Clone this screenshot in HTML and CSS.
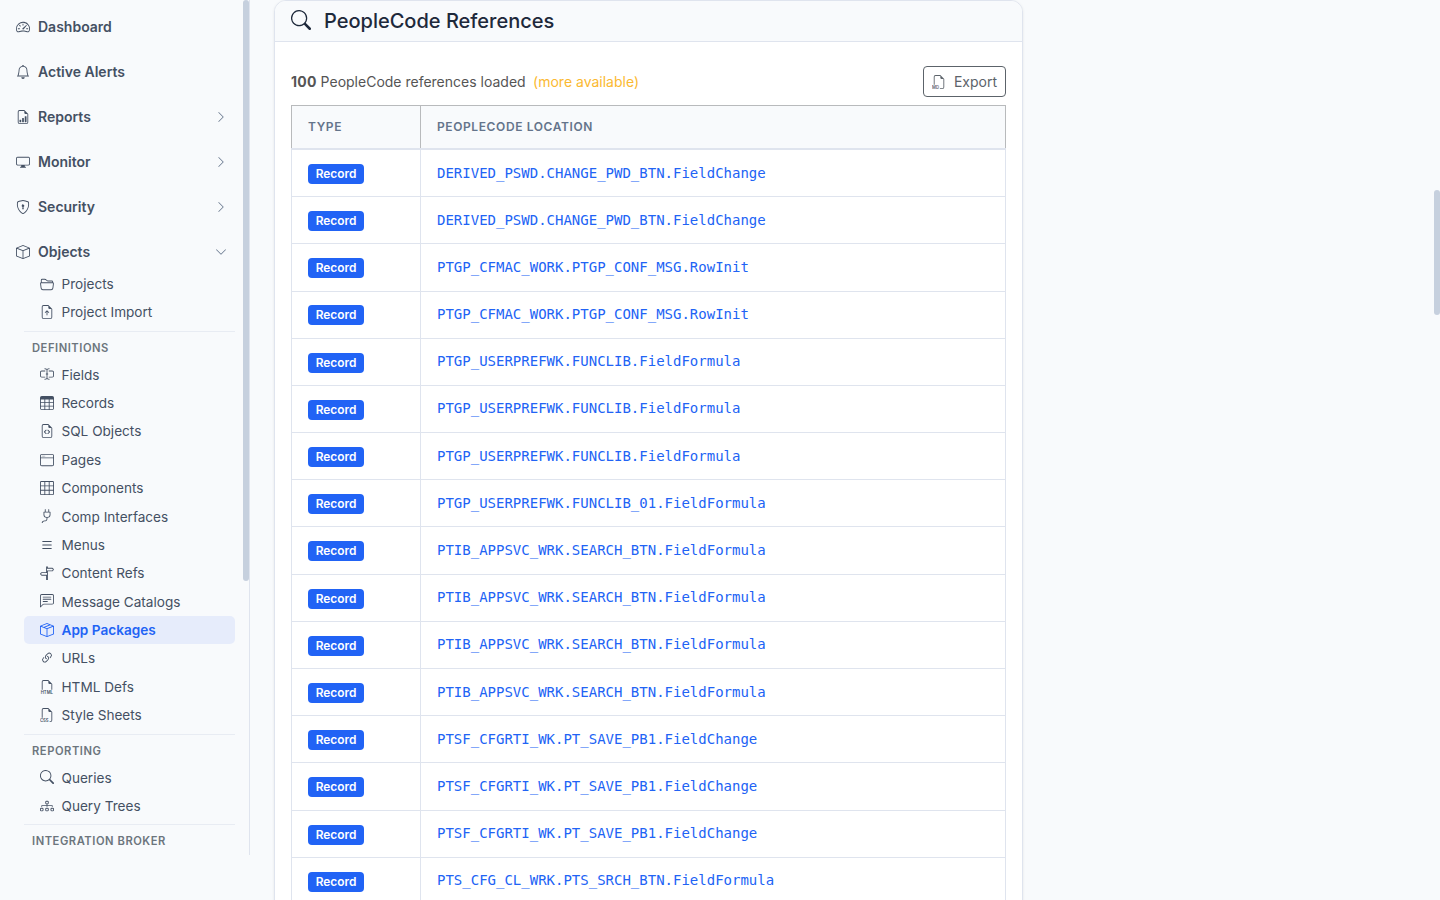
FILE: index.html
```
<!DOCTYPE html>
<html lang="en">
  <head>
    <meta charset="UTF-8" />
    <title>PeopleCode References</title>
    <link rel="stylesheet" href="styles.css">
  </head>
  <body>
    <svg class="sprite" xmlns="http://www.w3.org/2000/svg">
      <symbol id="speedometer" viewBox="0 0 16 16">
        <path d="M8 4a.5.5 0 0 1 .5.5V6a.5.5 0 0 1-1 0V4.5A.5.5 0 0 1 8 4M3.732 5.732a.5.5 0 0 1 .707 0l.915.914a.5.5 0 1 1-.708.708l-.914-.915a.5.5 0 0 1 0-.707M2 10a.5.5 0 0 1 .5-.5h1.586a.5.5 0 0 1 0 1H2.5A.5.5 0 0 1 2 10m9.5 0a.5.5 0 0 1 .5-.5h1.5a.5.5 0 0 1 0 1H12a.5.5 0 0 1-.5-.5m.754-4.246a.39.39 0 0 0-.527-.02L7.547 9.31a.91.91 0 1 0 1.302 1.258l3.434-4.297a.39.39 0 0 0-.029-.518z" />
        <path fill-rule="evenodd" d="M0 10a8 8 0 1 1 15.547 2.661c-.442 1.253-1.845 1.602-2.932 1.25C11.309 13.488 9.475 13 8 13c-1.474 0-3.31.488-4.615.911-1.087.352-2.49.003-2.932-1.25A8 8 0 0 1 0 10m8-7a7 7 0 0 0-6.603 9.329c.203.575.923.876 1.68.63C4.397 12.533 6.358 12 8 12s3.604.532 4.923.96c.757.245 1.477-.056 1.68-.631A7 7 0 0 0 8 3" />
      </symbol>
      <symbol id="bell" viewBox="0 0 16 16">
        <path d="M8 16a2 2 0 0 0 2-2H6a2 2 0 0 0 2 2M8 1.918l-.797.161A4 4 0 0 0 4 6c0 .628-.134 2.197-.459 3.742-.16.767-.376 1.566-.663 2.258h10.244c-.287-.692-.502-1.49-.663-2.258C12.134 8.197 12 6.628 12 6a4 4 0 0 0-3.203-3.92zM14.22 12c.223.447.481.801.78 1H1c.299-.199.557-.553.78-1C2.68 10.2 3 6.88 3 6c0-2.42 1.72-4.44 4.005-4.901a1 1 0 1 1 1.99 0A5 5 0 0 1 13 6c0 .88.32 4.2 1.22 6" />
      </symbol>
      <symbol id="bar-graph" viewBox="0 0 16 16">
        <path d="M10 13.5a.5.5 0 0 0 .5.5h1a.5.5 0 0 0 .5-.5v-6a.5.5 0 0 0-.5-.5h-1a.5.5 0 0 0-.5.5zm-2.5.5a.5.5 0 0 1-.5-.5v-4a.5.5 0 0 1 .5-.5h1a.5.5 0 0 1 .5.5v4a.5.5 0 0 1-.5.5zm-3 0a.5.5 0 0 1-.5-.5v-2a.5.5 0 0 1 .5-.5h1a.5.5 0 0 1 .5.5v2a.5.5 0 0 1-.5.5z" />
        <path d="M14 14V4.5L9.5 0H4a2 2 0 0 0-2 2v12a2 2 0 0 0 2 2h8a2 2 0 0 0 2-2M9.5 3A1.5 1.5 0 0 0 11 4.5h2V14a1 1 0 0 1-1 1H4a1 1 0 0 1-1-1V2a1 1 0 0 1 1-1h5.5z" />
      </symbol>
      <symbol id="display" viewBox="0 0 16 16">
        <path d="M0 4s0-2 2-2h12s2 0 2 2v6s0 2-2 2h-4q0 1 .25 1.5H11a.5.5 0 0 1 0 1H5a.5.5 0 0 1 0-1h.75Q6 13 6 12H2s-2 0-2-2zm1.398-.855a.76.76 0 0 0-.254.302A1.5 1.5 0 0 0 1 4.01V10c0 .325.078.502.145.602q.105.156.302.254a1.5 1.5 0 0 0 .538.143L2.01 11H14c.325 0 .502-.078.602-.145a.76.76 0 0 0 .254-.302 1.5 1.5 0 0 0 .143-.538L15 9.99V4c0-.325-.078-.502-.145-.602a.76.76 0 0 0-.302-.254A1.5 1.5 0 0 0 13.99 3H2c-.325 0-.502.078-.602.145" />
      </symbol>
      <symbol id="shield-lock" viewBox="0 0 16 16">
        <path d="M5.338 1.59a61 61 0 0 0-2.837.856.48.48 0 0 0-.328.39c-.554 4.157.726 7.19 2.253 9.188a10.7 10.7 0 0 0 2.287 2.233c.346.244.652.42.893.533q.18.085.293.118a1 1 0 0 0 .101.025 1 1 0 0 0 .1-.025q.114-.034.294-.118c.24-.113.547-.29.893-.533a10.7 10.7 0 0 0 2.287-2.233c1.527-1.997 2.807-5.031 2.253-9.188a.48.48 0 0 0-.328-.39c-.651-.213-1.75-.56-2.837-.855C9.552 1.29 8.531 1.067 8 1.067c-.53 0-1.552.223-2.662.524zM5.072.56C6.157.265 7.31 0 8 0s1.843.265 2.928.56c1.11.3 2.229.655 2.887.87a1.54 1.54 0 0 1 1.044 1.262c.596 4.477-.787 7.795-2.465 9.99a11.8 11.8 0 0 1-2.517 2.453 7 7 0 0 1-1.048.625c-.28.132-.581.24-.829.24s-.548-.108-.829-.24a7 7 0 0 1-1.048-.625 11.8 11.8 0 0 1-2.517-2.453C1.928 10.487.545 7.169 1.141 2.692A1.54 1.54 0 0 1 2.185 1.43 63 63 0 0 1 5.072.56" />
        <path d="M9.5 6.5a1.5 1.5 0 0 1-1 1.415l.385 1.99a.5.5 0 0 1-.491.595h-.788a.5.5 0 0 1-.49-.595l.384-1.99a1.5 1.5 0 1 1 2-1.415" />
      </symbol>
      <symbol id="box" viewBox="0 0 16 16">
        <path d="M8.186 1.113a.5.5 0 0 0-.372 0L1.846 3.5 8 5.961 14.154 3.5zM15 4.239l-6.5 2.6v7.922l6.5-2.6V4.24zM7.5 14.762V6.838L1 4.239v7.923zM7.443.184a1.5 1.5 0 0 1 1.114 0l7.129 2.852A.5.5 0 0 1 16 3.5v8.662a1 1 0 0 1-.629.928l-7.185 2.874a.5.5 0 0 1-.372 0L.63 13.09a1 1 0 0 1-.63-.928V3.5a.5.5 0 0 1 .314-.464z" />
      </symbol>
      <symbol id="box-seam" viewBox="0 0 16 16">
        <path d="M8.186 1.113a.5.5 0 0 0-.372 0L1.846 3.5l2.404.961L10.404 2zm3.564 1.426L5.596 5 8 5.961 14.154 3.5zm3.25 1.7-6.5 2.6v7.922l6.5-2.6V4.24zM7.5 14.762V6.838L1 4.239v7.923zM7.443.184a1.5 1.5 0 0 1 1.114 0l7.129 2.852A.5.5 0 0 1 16 3.5v8.662a1 1 0 0 1-.629.928l-7.185 2.874a.5.5 0 0 1-.372 0L.63 13.09a1 1 0 0 1-.63-.928V3.5a.5.5 0 0 1 .314-.464z" />
      </symbol>
      <symbol id="chevron-right" viewBox="0 0 16 16">
        <path fill-rule="evenodd" d="M4.646 1.646a.5.5 0 0 1 .708 0l6 6a.5.5 0 0 1 0 .708l-6 6a.5.5 0 0 1-.708-.708L10.293 8 4.646 2.354a.5.5 0 0 1 0-.708" />
      </symbol>
      <symbol id="chevron-down" viewBox="0 0 16 16">
        <path fill-rule="evenodd" d="M1.646 4.646a.5.5 0 0 1 .708 0L8 10.293l5.646-5.647a.5.5 0 0 1 .708.708l-6 6a.5.5 0 0 1-.708 0l-6-6a.5.5 0 0 1 0-.708" />
      </symbol>
      <symbol id="folder" viewBox="0 0 16 16">
        <path d="M1 3.5A1.5 1.5 0 0 1 2.5 2h2.764c.958 0 1.76.56 2.311 1.184C7.985 3.648 8.48 4 9 4h4.5A1.5 1.5 0 0 1 15 5.5v.64c.57.265.94.876.856 1.546l-.64 5.124A2.5 2.5 0 0 1 12.733 15H3.266a2.5 2.5 0 0 1-2.481-2.19l-.64-5.124A1.5 1.5 0 0 1 1 6.14zM2 6h12v-.5a.5.5 0 0 0-.5-.5H9c-.964 0-1.71-.629-2.174-1.154C6.374 3.334 5.82 3 5.264 3H2.5a.5.5 0 0 0-.5.5zm-.367 1a.5.5 0 0 0-.496.562l.64 5.124A1.5 1.5 0 0 0 3.266 14h9.468a1.5 1.5 0 0 0 1.489-1.314l.64-5.124A.5.5 0 0 0 14.367 7z" />
      </symbol>
      <symbol id="file-up" viewBox="0 0 16 16">
        <path d="M8.5 11.5a.5.5 0 0 1-1 0V7.707L6.354 8.854a.5.5 0 1 1-.708-.708l2-2a.5.5 0 0 1 .708 0l2 2a.5.5 0 0 1-.708.708L8.5 7.707z" />
        <path d="M14 14V4.5L9.5 0H4a2 2 0 0 0-2 2v12a2 2 0 0 0 2 2h8a2 2 0 0 0 2-2M9.5 3A1.5 1.5 0 0 0 11 4.5h2V14a1 1 0 0 1-1 1H4a1 1 0 0 1-1-1V2a1 1 0 0 1 1-1h5.5z" />
      </symbol>
      <symbol id="cursor-text" viewBox="0 0 16 16">
        <path d="M5 2a.5.5 0 0 1 .5-.5c.862 0 1.573.287 2.06.566.174.099.321.198.44.286.119-.088.266-.187.44-.286A4.17 4.17 0 0 1 10.5 1.5a.5.5 0 0 1 0 1c-.638 0-1.177.213-1.564.434a3.5 3.5 0 0 0-.436.294V7.5H9a.5.5 0 0 1 0 1h-.5v4.272c.1.08.248.187.436.294.387.221.926.434 1.564.434a.5.5 0 0 1 0 1 4.17 4.17 0 0 1-2.06-.566A5 5 0 0 1 8 13.65a5 5 0 0 1-.44.285 4.17 4.17 0 0 1-2.06.566.5.5 0 0 1 0-1c.638 0 1.177-.213 1.564-.434.188-.107.335-.214.436-.294V8.5H7a.5.5 0 0 1 0-1h.5V3.228a3.5 3.5 0 0 0-.436-.294A3.17 3.17 0 0 0 5.5 2.5.5.5 0 0 1 5 2" />
        <path d="M10 5h4a1 1 0 0 1 1 1v4a1 1 0 0 1-1 1h-4v1h4a2 2 0 0 0 2-2V6a2 2 0 0 0-2-2h-4zM6 5V4H2a2 2 0 0 0-2 2v4a2 2 0 0 0 2 2h4v-1H2a1 1 0 0 1-1-1V6a1 1 0 0 1 1-1z" />
      </symbol>
      <symbol id="table" viewBox="0 0 16 16">
        <path d="M0 2a2 2 0 0 1 2-2h12a2 2 0 0 1 2 2v12a2 2 0 0 1-2 2H2a2 2 0 0 1-2-2zm15 2h-4v3h4zm0 4h-4v3h4zm0 4h-4v3h3a1 1 0 0 0 1-1zm-5 3v-3H6v3zm-5 0v-3H1v2a1 1 0 0 0 1 1zm-4-4h4V8H1zm0-4h4V4H1zm5-3v3h4V4zm4 4H6v3h4z" />
      </symbol>
      <symbol id="file-code" viewBox="0 0 16 16">
        <path d="M14 14V4.5L9.5 0H4a2 2 0 0 0-2 2v12a2 2 0 0 0 2 2h8a2 2 0 0 0 2-2M9.5 3A1.5 1.5 0 0 0 11 4.5h2V14a1 1 0 0 1-1 1H4a1 1 0 0 1-1-1V2a1 1 0 0 1 1-1h5.5z" />
        <path d="M8.646 6.646a.5.5 0 0 1 .708 0l2 2a.5.5 0 0 1 0 .708l-2 2a.5.5 0 0 1-.708-.708L10.293 9 8.646 7.354a.5.5 0 0 1 0-.708m-1.292 0a.5.5 0 0 0-.708 0l-2 2a.5.5 0 0 0 0 .708l2 2a.5.5 0 0 0 .708-.708L5.707 9l1.647-1.646a.5.5 0 0 0 0-.708" />
      </symbol>
      <symbol id="window" viewBox="0 0 16 16">
        <path d="M2.5 4a.5.5 0 1 0 0-1 .5.5 0 0 0 0 1m2-.5a.5.5 0 1 1-1 0 .5.5 0 0 1 1 0m1 .5a.5.5 0 1 0 0-1 .5.5 0 0 0 0 1" />
        <path d="M2 1a2 2 0 0 0-2 2v10a2 2 0 0 0 2 2h12a2 2 0 0 0 2-2V3a2 2 0 0 0-2-2zm13 2v2H1V3a1 1 0 0 1 1-1h12a1 1 0 0 1 1 1M2 14a1 1 0 0 1-1-1V6h14v7a1 1 0 0 1-1 1z" />
      </symbol>
      <symbol id="grid" viewBox="0 0 16 16">
        <path d="M0 1.5A1.5 1.5 0 0 1 1.5 0h13A1.5 1.5 0 0 1 16 1.5v13a1.5 1.5 0 0 1-1.5 1.5h-13A1.5 1.5 0 0 1 0 14.5zM1.5 1a.5.5 0 0 0-.5.5V5h4V1zM5 6H1v4h4zm1 4h4V6H6zm-1 1H1v3.5a.5.5 0 0 0 .5.5H5zm1 0v4h4v-4zm5 0v4h3.5a.5.5 0 0 0 .5-.5V11zm0-1h4V6h-4zm0-5h4V1.5a.5.5 0 0 0-.5-.5H11zm-1 0V1H6v4z" />
      </symbol>
      <symbol id="plug" viewBox="0 0 16 16">
        <path d="M6 0a.5.5 0 0 1 .5.5V3h3V.5a.5.5 0 0 1 1 0V3h1a.5.5 0 0 1 .5.5v3A3.5 3.5 0 0 1 8.5 10c-.002.434-.01.845-.04 1.22-.041.514-.126 1.003-.317 1.424a2.08 2.08 0 0 1-.97 1.028C6.725 13.9 6.169 14 5.5 14c-.998 0-1.61.33-1.974.718A1.92 1.92 0 0 0 3 16H2c0-.616.232-1.367.797-1.968C3.374 13.42 4.261 13 5.5 13c.581 0 .962-.088 1.218-.219.241-.123.4-.3.514-.55.121-.266.193-.621.23-1.09.027-.34.035-.718.037-1.141A3.5 3.5 0 0 1 4 6.5v-3a.5.5 0 0 1 .5-.5h1V.5A.5.5 0 0 1 6 0M5 4v2.5A2.5 2.5 0 0 0 7.5 9h1A2.5 2.5 0 0 0 11 6.5V4z" />
      </symbol>
      <symbol id="list" viewBox="0 0 16 16">
        <path fill-rule="evenodd" d="M2.5 12a.5.5 0 0 1 .5-.5h10a.5.5 0 0 1 0 1H3a.5.5 0 0 1-.5-.5m0-4a.5.5 0 0 1 .5-.5h10a.5.5 0 0 1 0 1H3a.5.5 0 0 1-.5-.5m0-4a.5.5 0 0 1 .5-.5h10a.5.5 0 0 1 0 1H3a.5.5 0 0 1-.5-.5" />
      </symbol>
      <symbol id="signpost" viewBox="0 0 16 16">
        <path d="M7 7V1.414a1 1 0 0 1 2 0V2h5a1 1 0 0 1 .8.4l.975 1.3a.5.5 0 0 1 0 .6L14.8 5.6a1 1 0 0 1-.8.4H9v10H7v-5H2a1 1 0 0 1-.8-.4L.225 9.3a.5.5 0 0 1 0-.6L1.2 7.4A1 1 0 0 1 2 7zm1 3V8H2l-.75 1L2 10zm0-5h6l.75-1L14 3H8z" />
      </symbol>
      <symbol id="chat" viewBox="0 0 16 16">
        <path d="M14 1a1 1 0 0 1 1 1v8a1 1 0 0 1-1 1H4.414A2 2 0 0 0 3 11.586l-2 2V2a1 1 0 0 1 1-1zM2 0a2 2 0 0 0-2 2v12.793a.5.5 0 0 0 .854.353l2.853-2.853A1 1 0 0 1 4.414 12H14a2 2 0 0 0 2-2V2a2 2 0 0 0-2-2z" />
        <path d="M3 3.5a.5.5 0 0 1 .5-.5h9a.5.5 0 0 1 0 1h-9a.5.5 0 0 1-.5-.5M3 6a.5.5 0 0 1 .5-.5h9a.5.5 0 0 1 0 1h-9A.5.5 0 0 1 3 6m0 2.5a.5.5 0 0 1 .5-.5h5a.5.5 0 0 1 0 1h-5a.5.5 0 0 1-.5-.5" />
      </symbol>
      <symbol id="link" viewBox="0 0 16 16">
        <path d="M4.715 6.542 3.343 7.914a3 3 0 1 0 4.243 4.243l1.828-1.829A3 3 0 0 0 8.586 5.5L8 6.086a1 1 0 0 0-.154.199 2 2 0 0 1 .861 3.337L6.88 11.45a2 2 0 1 1-2.83-2.83l.793-.792a4 4 0 0 1-.128-1.287z" />
        <path d="M6.586 4.672A3 3 0 0 0 7.414 9.5l.775-.776a2 2 0 0 1-.896-3.346L9.12 3.55a2 2 0 1 1 2.83 2.83l-.793.792c.112.42.155.855.128 1.287l1.372-1.372a3 3 0 1 0-4.243-4.243z" />
      </symbol>
      <symbol id="filetype-html" viewBox="0 0 16 16">
        <path fill-rule="evenodd" d="M14 4.5V11h-1V4.5h-2A1.5 1.5 0 0 1 9.5 3V1H4a1 1 0 0 0-1 1v9H2V2a2 2 0 0 1 2-2h5.5z" />
        <text class="filetype" x="0.8" y="15.9" textLength="14" lengthAdjust="spacingAndGlyphs">HTML</text>
      </symbol>
      <symbol id="filetype-css" viewBox="0 0 16 16">
        <path fill-rule="evenodd" d="M14 4.5V14a2 2 0 0 1-2 2h-1v-1h1a1 1 0 0 0 1-1V4.5h-2A1.5 1.5 0 0 1 9.5 3V1H4a1 1 0 0 0-1 1v9H2V2a2 2 0 0 1 2-2h5.5z" />
        <text class="filetype" x="0" y="15.9" textLength="9.8" lengthAdjust="spacingAndGlyphs">CSS</text>
      </symbol>
      <symbol id="filetype-md" viewBox="0 0 16 16">
        <path fill-rule="evenodd" d="M14 4.5V14a2 2 0 0 1-2 2H9v-1h3a1 1 0 0 0 1-1V4.5h-2A1.5 1.5 0 0 1 9.5 3V1H4a1 1 0 0 0-1 1v9H2V2a2 2 0 0 1 2-2h5.5z" />
        <text class="filetype" x="0" y="15.9" textLength="8" lengthAdjust="spacingAndGlyphs">MD</text>
      </symbol>
      <symbol id="search" viewBox="0 0 16 16">
        <path d="M11.742 10.344a6.5 6.5 0 1 0-1.397 1.398h-.001q.044.06.098.115l3.85 3.85a1 1 0 0 0 1.415-1.414l-3.85-3.85a1 1 0 0 0-.115-.1zM12 6.5a5.5 5.5 0 1 1-11 0 5.5 5.5 0 0 1 11 0" />
      </symbol>
      <symbol id="diagram" viewBox="0 0 16 16">
        <path fill-rule="evenodd" d="M6 3.5A1.5 1.5 0 0 1 7.5 2h1A1.5 1.5 0 0 1 10 3.5v1A1.5 1.5 0 0 1 8.5 6v1H14a.5.5 0 0 1 .5.5v1a.5.5 0 0 1-1 0V8h-5v.5a.5.5 0 0 1-1 0V8h-5v.5a.5.5 0 0 1-1 0v-1A.5.5 0 0 1 2 7h5.5V6A1.5 1.5 0 0 1 6 4.5zM8.5 5a.5.5 0 0 0 .5-.5v-1a.5.5 0 0 0-.5-.5h-1a.5.5 0 0 0-.5.5v1a.5.5 0 0 0 .5.5zM0 11.5A1.5 1.5 0 0 1 1.5 10h1A1.5 1.5 0 0 1 4 11.5v1A1.5 1.5 0 0 1 2.5 14h-1A1.5 1.5 0 0 1 0 12.5zm1.5-.5a.5.5 0 0 0-.5.5v1a.5.5 0 0 0 .5.5h1a.5.5 0 0 0 .5-.5v-1a.5.5 0 0 0-.5-.5zm4.5.5A1.5 1.5 0 0 1 7.5 10h1a1.5 1.5 0 0 1 1.5 1.5v1A1.5 1.5 0 0 1 8.5 14h-1A1.5 1.5 0 0 1 6 12.5zm1.5-.5a.5.5 0 0 0-.5.5v1a.5.5 0 0 0 .5.5h1a.5.5 0 0 0 .5-.5v-1a.5.5 0 0 0-.5-.5zm4.5.5a1.5 1.5 0 0 1 1.5-1.5h1a1.5 1.5 0 0 1 1.5 1.5v1a1.5 1.5 0 0 1-1.5 1.5h-1a1.5 1.5 0 0 1-1.5-1.5zm1.5-.5a.5.5 0 0 0-.5.5v1a.5.5 0 0 0 .5.5h1a.5.5 0 0 0 .5-.5v-1a.5.5 0 0 0-.5-.5z" />
      </symbol>
    </svg>

    <nav class="sidebar">
      <a class="nav-link"><svg class="icon"><use href="#speedometer" /></svg>Dashboard</a>
      <a class="nav-link"><svg class="icon"><use href="#bell" /></svg>Active Alerts</a>
      <a class="nav-link"><svg class="icon"><use href="#bar-graph" /></svg>Reports<svg class="chevron"><use href="#chevron-right" /></svg></a>
      <a class="nav-link"><svg class="icon"><use href="#display" /></svg>Monitor<svg class="chevron"><use href="#chevron-right" /></svg></a>
      <a class="nav-link"><svg class="icon"><use href="#shield-lock" /></svg>Security<svg class="chevron"><use href="#chevron-right" /></svg></a>
      <a class="nav-link"><svg class="icon"><use href="#box" /></svg>Objects<svg class="chevron"><use href="#chevron-down" /></svg></a>

      <div class="submenu">
        <a class="sub-link"><svg class="icon"><use href="#folder" /></svg>Projects</a>
        <a class="sub-link"><svg class="icon"><use href="#file-up" /></svg>Project Import</a>
        <h6 class="sub-header">Definitions</h6>
        <a class="sub-link"><svg class="icon"><use href="#cursor-text" /></svg>Fields</a>
        <a class="sub-link"><svg class="icon"><use href="#table" /></svg>Records</a>
        <a class="sub-link"><svg class="icon"><use href="#file-code" /></svg>SQL Objects</a>
        <a class="sub-link"><svg class="icon"><use href="#window" /></svg>Pages</a>
        <a class="sub-link"><svg class="icon"><use href="#grid" /></svg>Components</a>
        <a class="sub-link"><svg class="icon"><use href="#plug" /></svg>Comp Interfaces</a>
        <a class="sub-link"><svg class="icon"><use href="#list" /></svg>Menus</a>
        <a class="sub-link"><svg class="icon"><use href="#signpost" /></svg>Content Refs</a>
        <a class="sub-link"><svg class="icon"><use href="#chat" /></svg>Message Catalogs</a>
        <a class="sub-link active"><svg class="icon"><use href="#box-seam" /></svg>App Packages</a>
        <a class="sub-link"><svg class="icon"><use href="#link" /></svg>URLs</a>
        <a class="sub-link"><svg class="icon"><use href="#filetype-html" /></svg>HTML Defs</a>
        <a class="sub-link"><svg class="icon"><use href="#filetype-css" /></svg>Style Sheets</a>
        <h6 class="sub-header">Reporting</h6>
        <a class="sub-link"><svg class="icon"><use href="#search" /></svg>Queries</a>
        <a class="sub-link"><svg class="icon"><use href="#diagram" /></svg>Query Trees</a>
        <h6 class="sub-header">Integration Broker</h6>
      </div>
      <div class="sidebar-thumb"></div>
    </nav>

    <main class="content">
      <section class="card">
        <div class="card-header">
          <svg class="title-icon"><use href="#search" /></svg>
          <h5>PeopleCode References</h5>
        </div>
        <div class="card-body">
          <div class="toolbar">
            <div class="summary"><strong>100</strong> PeopleCode references loaded <span class="more">(more available)</span></div>
            <button class="export-btn"><svg class="icon"><use href="#filetype-md" /></svg>Export</button>
          </div>
          <table class="ref-table">
            <thead>
              <tr>
                <th class="type-col">Type</th>
                <th>PeopleCode Location</th>
              </tr>
            </thead>
            <tbody id="refRows"></tbody>
          </table>
        </div>
      </section>
    </main>
    <div class="page-thumb"></div>

    <script>
      const references = [
        'DERIVED_PSWD.CHANGE_PWD_BTN.FieldChange',
        'DERIVED_PSWD.CHANGE_PWD_BTN.FieldChange',
        'PTGP_CFMAC_WORK.PTGP_CONF_MSG.RowInit',
        'PTGP_CFMAC_WORK.PTGP_CONF_MSG.RowInit',
        'PTGP_USERPREFWK.FUNCLIB.FieldFormula',
        'PTGP_USERPREFWK.FUNCLIB.FieldFormula',
        'PTGP_USERPREFWK.FUNCLIB.FieldFormula',
        'PTGP_USERPREFWK.FUNCLIB_01.FieldFormula',
        'PTIB_APPSVC_WRK.SEARCH_BTN.FieldFormula',
        'PTIB_APPSVC_WRK.SEARCH_BTN.FieldFormula',
        'PTIB_APPSVC_WRK.SEARCH_BTN.FieldFormula',
        'PTIB_APPSVC_WRK.SEARCH_BTN.FieldFormula',
        'PTSF_CFGRTI_WK.PT_SAVE_PB1.FieldChange',
        'PTSF_CFGRTI_WK.PT_SAVE_PB1.FieldChange',
        'PTSF_CFGRTI_WK.PT_SAVE_PB1.FieldChange',
        'PTS_CFG_CL_WRK.PTS_SRCH_BTN.FieldFormula',
      ]

      const refRows = document.getElementById('refRows')

      references.forEach((location) => {
        const row = document.createElement('tr')
        row.innerHTML = `<td><span class="badge">Record</span></td><td class="location-cell"><a class="location">${location}</a></td>`
        refRows.appendChild(row)
      })
    </script>
  </body>
</html>
```

FILE: styles.css
```
* {
  box-sizing: border-box;
}

body {
  font-family: Inter, sans-serif;
  font-size: 14px;
  line-height: 1.5;
  color: #1e293b;
  background-color: #f8fafc;
  margin: 0;
  height: 900px;
  display: flex;
  align-items: flex-start;
  overflow: hidden;
  position: relative;
}

.sprite {
  display: none;
}

.icon {
  width: 14px;
  height: 14px;
  flex: none;
  fill: currentColor;
}

.filetype {
  font-family: Inter, sans-serif;
  font-size: 5.6px;
  font-weight: 600;
}

.sidebar {
  position: relative;
  flex: none;
  width: 250px;
  height: 855px;
  padding: 4px 0 0;
  border-right: 1px solid #dfe4ee;
  overflow: hidden;
}

.nav-link {
  display: flex;
  align-items: center;
  gap: 8px;
  height: 45px;
  padding: 0 22px 0 16px;
  font-size: 14px;
  font-weight: 600;
  color: #445063;
}

.nav-link svg {
  margin-top: 1px;
}

.chevron {
  width: 12px;
  height: 12px;
  margin-left: auto;
  fill: #64748b;
}

.submenu {
  margin: -4.06px 14px 0 24px;
}

.sub-link {
  display: flex;
  align-items: center;
  gap: 7.5px;
  height: 28.375px;
  padding: 0 16px;
  font-size: 13.6px;
  color: #445063;
  border-radius: 5px;
}

.sub-link .icon {
  margin-bottom: 1px;
}

.sub-link.active {
  color: #2163f5;
  background-color: #e6ecfb;
  font-weight: 600;
}

.sub-header {
  height: 30px;
  margin: 4px 0 0;
  padding: 8px 8px 0;
  border-top: 1px solid #e8ecf3;
  font-size: 11.2px;
  line-height: 17px;
  font-weight: 600;
  letter-spacing: 0.54px;
  text-transform: uppercase;
  color: #6c757d;
}

.sidebar-thumb {
  position: absolute;
  top: 0;
  right: 0;
  width: 6px;
  height: 581px;
  border-radius: 3px;
  background-color: #c6d0de;
}

.page-thumb {
  position: absolute;
  top: 190px;
  right: 0;
  width: 6px;
  height: 125px;
  border-radius: 3px;
  background-color: #c6d0de;
}

.content {
  flex: 1;
  padding: 0 24px;
}

.card {
  width: 749px;
  background-color: #fff;
  border: 1px solid #dfe4ee;
  border-radius: 12px;
  box-shadow: 0 1px 3px rgba(0, 0, 0, 0.08);
  overflow: hidden;
}

.card-header {
  display: flex;
  align-items: center;
  gap: 13px;
  height: 41px;
  padding: 0 16px;
  border-bottom: 1px solid #dfe4ee;
  background-color: #f8fafc;
}

.title-icon {
  width: 20px;
  height: 20px;
  margin-bottom: 2px;
  fill: currentColor;
}

.card-header h5 {
  margin: 0;
  font-size: 20px;
  font-weight: 500;
  line-height: 24px;
}

.card-body {
  padding: 24px 16px;
}

.toolbar {
  display: flex;
  justify-content: space-between;
  align-items: center;
  margin-bottom: 8px;
}

.summary {
  color: #555;
}

.summary strong {
  letter-spacing: 0.25px;
}

.more {
  margin-left: 3.5px;
  color: #fbb931;
}

.export-btn {
  display: flex;
  align-items: center;
  gap: 8px;
  height: 31px;
  padding: 0 8px 0 7.5px;
  font-family: inherit;
  font-size: 14px;
  color: #5c636a;
  background: none;
  border: 1px solid #5c636a;
  border-radius: 4px;
}

.ref-table {
  width: 100%;
  border-collapse: collapse;
  table-layout: fixed;
}

.ref-table th {
  height: 43.97px;
  padding: 0 16px;
  border: 1px solid #b8babc;
  border-bottom: 2px solid #dfe4ee;
  background-color: #f8fafc;
  font-size: 12px;
  font-weight: 600;
  letter-spacing: 0.6px;
  text-align: left;
  text-transform: uppercase;
  color: #64748b;
}

.ref-table .type-col {
  width: 129px;
}

.ref-table td {
  height: 47.1875px;
  padding: 0 16px 0.3px;
  border: 1px solid #dfe4ee;
}

.ref-table .location-cell {
  padding-bottom: 1.1px;
}

.badge {
  display: inline-block;
  padding: 4px 7.7px;
  border-radius: 4px;
  background-color: #2163f5;
  color: #fff;
  font-size: 11.9px;
  line-height: 12px;
  font-weight: 600;
}

.location {
  font-family: "DejaVu Sans Mono", monospace;
  color: #2163f5;
}
```
